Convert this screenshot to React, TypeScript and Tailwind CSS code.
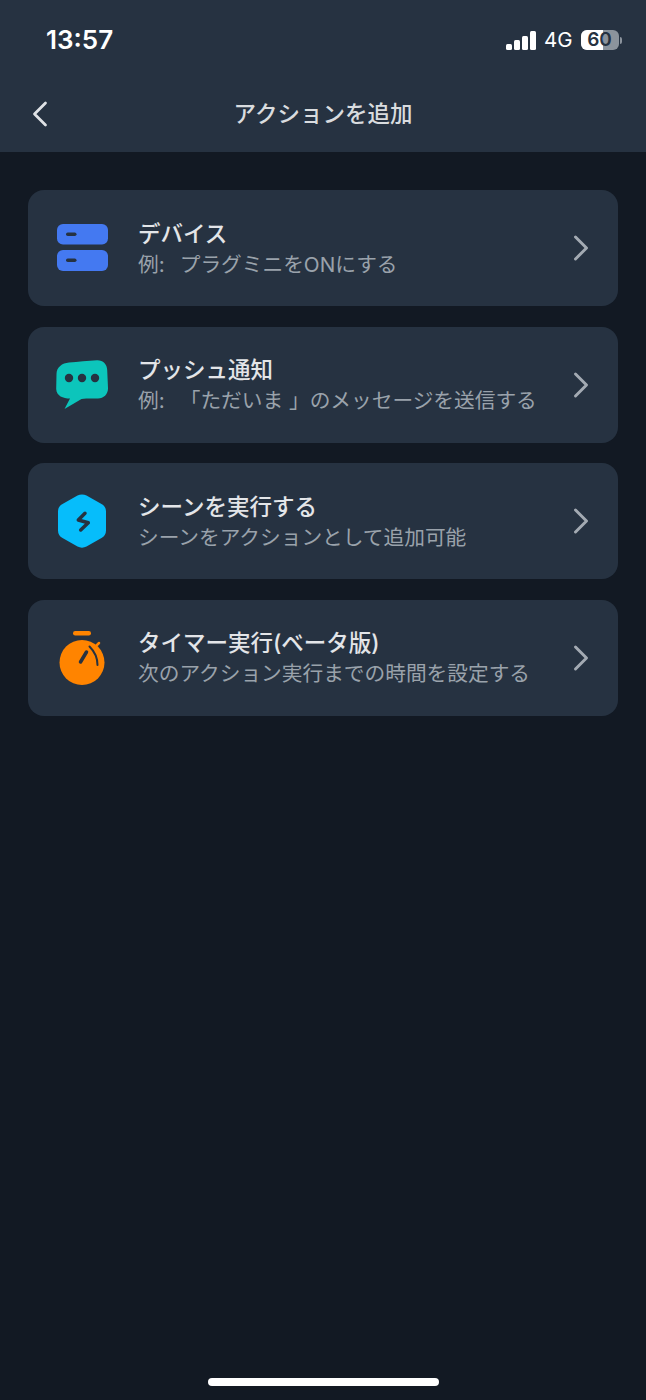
import { ChevronLeft, ChevronRight } from "lucide-react";
import type { ReactNode } from "react";

const jpFont = "font-['Inter','Noto_Sans_CJK_JP',sans-serif]";

function DeviceIcon() {
  return (
    <svg width="52" height="48" viewBox="0 0 52 48">
      <rect x="1" y="0" width="51" height="20.500" rx="6" fill="#4479f1" />
      <rect x="1" y="26" width="51" height="21" rx="6" fill="#4479f1" />
      <rect x="10" y="8.500" width="10.500" height="3.500" rx="1.750" fill="#263241" />
      <rect x="10" y="34.500" width="10.500" height="3.500" rx="1.750" fill="#263241" />
    </svg>
  );
}

function ChatIcon() {
  return (
    <svg width="52" height="50" viewBox="0 0 52 50">
      <path
        d="M13 2.500C22 1.600 32 .8 41 .2 47 0 51 4 51.200 10L52 28C52.200 34 48 38.500 42 38.500 36 38.500 30 38.300 25.500 39L8.500 49 14 38.500C7 38.500.5 36 .2 29L.5 14C.7 7 6 3.200 13 2.500Z"
        fill="#0cc5bb"
      />
      <circle cx="13" cy="18" r="4.200" fill="#263241" />
      <circle cx="26" cy="18" r="4.200" fill="#263241" />
      <circle cx="39" cy="18" r="4.200" fill="#263241" />
    </svg>
  );
}

function SceneIcon() {
  return (
    <svg width="50" height="54" viewBox="0 0 50 54">
      <path
        d="M20.500 1.500C23.300 0 26.700 0 29.500 1.500L44.500 10C47.300 11.500 49 14 49 17.500V36.500C49 40 47.300 42.500 44.500 44L29.500 52.500C26.700 54 23.300 54 20.500 52.500L5.500 44C2.700 42.500 1 40 1 36.500V17.500C1 14 2.700 11.500 5.500 10Z"
        fill="#06bdfb"
      />
      <path
        d="M28 19.300L21.300 26L31.300 28.700L23.700 36"
        fill="none"
        stroke="#263241"
        strokeWidth="3.500"
        strokeLinecap="round"
        strokeLinejoin="round"
      />
    </svg>
  );
}

function TimerIcon() {
  return (
    <svg width="46" height="54" viewBox="0 0 46 54">
      <rect x="14" y="0" width="18" height="4.500" rx="2.200" fill="#ff8400" />
      <circle cx="23" cy="31.500" r="22.500" fill="#ff8400" />
      <path
        d="M30.500 15.500C35 20 38.500 26 38.500 34"
        fill="none"
        stroke="#263241"
        strokeWidth="2"
        strokeLinecap="round"
      />
      <path d="M21.500 31L27.500 21" stroke="#263241" strokeWidth="3.500" strokeLinecap="round" />
      <path d="M37 15L40 12" stroke="#ff8400" strokeWidth="2.500" strokeLinecap="round" />
    </svg>
  );
}

function SignalBars() {
  return (
    <div className="flex items-end gap-[2.500px]">
      <div className="h-[6px] w-[5.500px] rounded-[1.500px] bg-white" />
      <div className="h-[10px] w-[5.500px] rounded-[1.500px] bg-white" />
      <div className="h-[14px] w-[5.500px] rounded-[1.500px] bg-white" />
      <div className="h-[19px] w-[5.500px] rounded-[1.500px] bg-white" />
    </div>
  );
}

function Battery({ level }: { level: number }) {
  return (
    <div className="flex items-center gap-[1.500px]">
      <div className="relative h-[20px] w-[38px] rounded-[6px] bg-[#8b939c]">
        <div className="h-full rounded-l-[6px] bg-white" style={{ width: `${level}%` }} />
        <span className="absolute inset-0 flex items-center justify-center font-['Inter',sans-serif] text-[19px] font-semibold leading-[20px] text-[#263241]">
          {level}
        </span>
      </div>
      <div className="h-[7px] w-[2px] rounded-r-full bg-[#8b939c]" />
    </div>
  );
}

type RowProps = {
  icon: ReactNode;
  title: string;
  subtitle: ReactNode;
};

function ActionRow({ icon, title, subtitle }: RowProps) {
  return (
    <div className="flex h-[116px] items-center rounded-[16px] bg-[#263241] pl-[28px] pr-[15px]">
      <div className="flex w-[52px] shrink-0 items-center justify-center">{icon}</div>
      <div className="ml-[30px] min-w-0 flex-1 pt-[2px]">
        <div className="whitespace-nowrap text-[22.500px] font-medium leading-[30px] text-[#e3e5e8]">
          {title}
        </div>
        <div className="mt-[1px] whitespace-pre text-[20.700px] leading-[30px] text-[#9aa2ab]">{subtitle}</div>
      </div>
      <ChevronRight className="shrink-0 text-[#a3aab2]" size={44} strokeWidth={1.600} />
    </div>
  );
}

// the colon takes a full cell, like a full-width mark
function ExamplePrefix() {
  return (
    <>
      例<span className="inline-block w-[21px]">:</span>
    </>
  );
}

export default function App() {
  return (
    <div className={`relative flex h-[1400px] w-[646px] flex-col overflow-hidden bg-[#121923] ${jpFont}`}>
      {/* status bar + title */}
      <header className="h-[152px] shrink-0 bg-[#263241]">
        <div className="flex h-[76px] items-start justify-between pl-[46px] pr-[24px] pt-[24px]">
          <span className="font-['Inter',sans-serif] text-[26px] font-semibold leading-[32px] text-white">13:57</span>
          <div className="flex items-center gap-[8px] pt-[3px]">
            <SignalBars />
            <span className="font-['Inter',sans-serif] text-[20.500px] leading-[26px] text-white">4G</span>
            <Battery level={60} />
          </div>
        </div>
        <div className="relative flex h-[76px] items-center justify-center">
          <ChevronLeft
            className="absolute left-[18px] top-[16px] text-[#dfe2e5]"
            size={44}
            strokeWidth={1.500}
          />
          <h1 className="text-[22.500px] font-medium leading-[30px] text-[#d9dcdf]">アクションを追加</h1>
        </div>
      </header>

      <main className="flex flex-col gap-[20.500px] px-[28px] pt-[38px]">
        <ActionRow
          icon={<DeviceIcon />}
          title="デバイス"
          subtitle={
            <>
              <ExamplePrefix />
              プラグミニをONにする
            </>
          }
        />
        <ActionRow
          icon={<ChatIcon />}
          title="プッシュ通知"
          subtitle={
            <>
              <ExamplePrefix />
              「ただいま 」のメッセージを送信する
            </>
          }
        />
        <ActionRow icon={<SceneIcon />} title="シーンを実行する" subtitle="シーンをアクションとして追加可能" />
        <ActionRow icon={<TimerIcon />} title="タイマー実行(ベータ版)" subtitle="次のアクション実行までの時間を設定する" />
      </main>

      {/* home indicator */}
      <div className="absolute bottom-[14px] left-[208px] h-[8px] w-[231px] rounded-full bg-white" />
    </div>
  );
}
